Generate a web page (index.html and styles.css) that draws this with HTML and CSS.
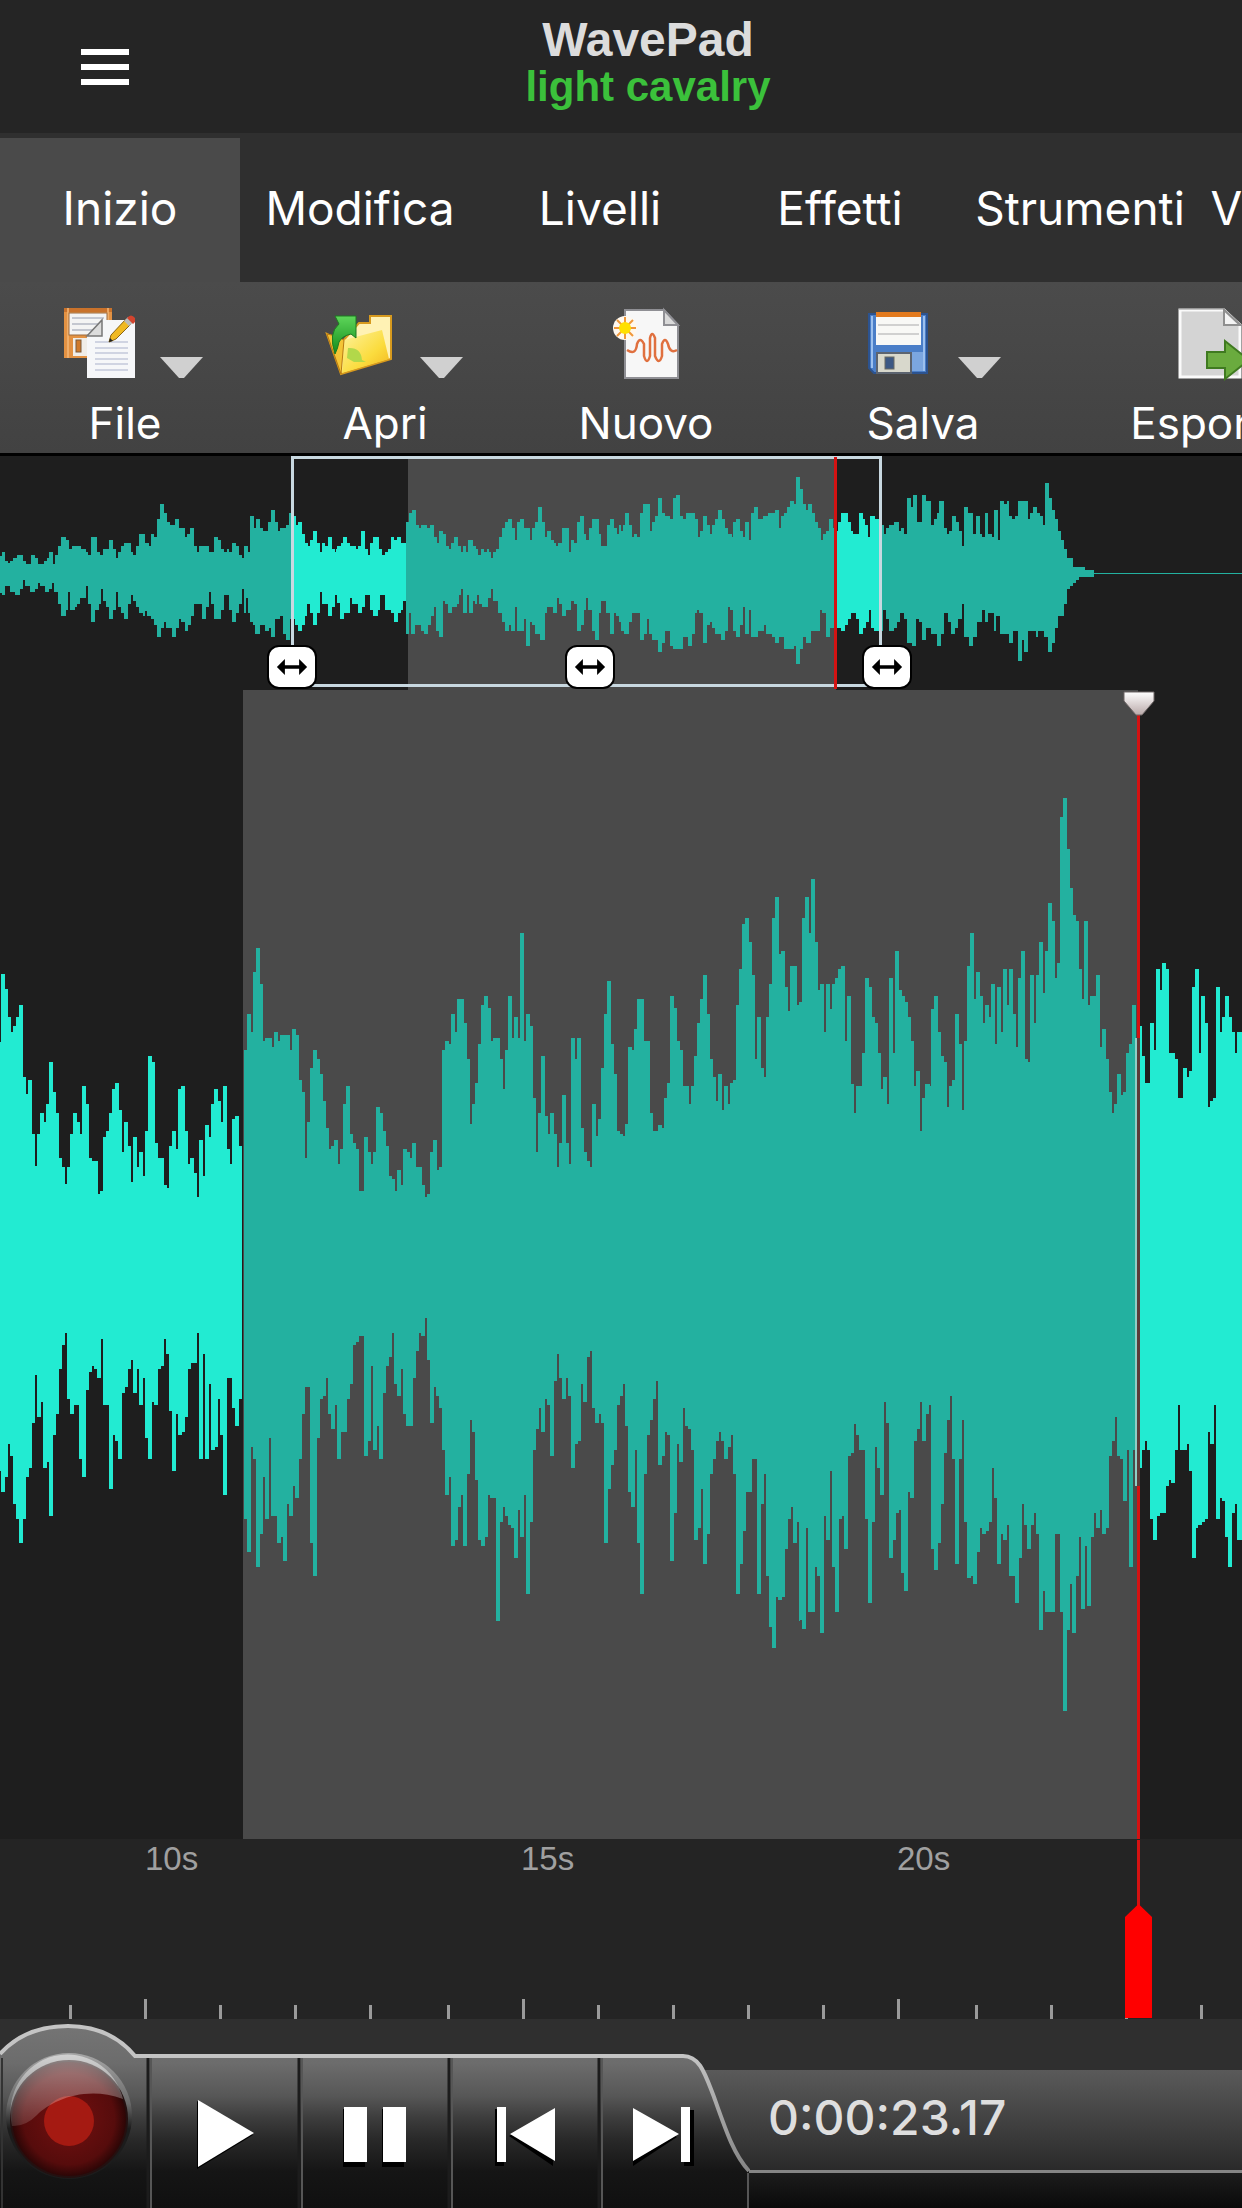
FILE: index.html
```html
<!DOCTYPE html>
<html lang="it">
<head>
  <meta charset="UTF-8">
  <meta name="viewport" content="width=device-width, initial-scale=1.0">
  <title>WavePad</title>
  <link rel="stylesheet" href="styles.css">
</head>
<body>

  <!-- Header -->
  <header class="header">
    <button type="button" class="menu-button" aria-label="Menu">
      <span class="menu-line"></span>
      <span class="menu-line"></span>
      <span class="menu-line"></span>
    </button>
    <div class="title">
      <h1>WavePad</h1>
      <p>light cavalry</p>
    </div>
  </header>

  <!-- Tabs -->
  <nav class="tabs">
    <button type="button" class="tab active">Inizio</button>
    <button type="button" class="tab">Modifica</button>
    <button type="button" class="tab">Livelli</button>
    <button type="button" class="tab">Effetti</button>
    <button type="button" class="tab">Strumenti</button>
    <button type="button" class="tab">Visualizza</button>
  </nav>

  <!-- Toolbar -->
  <div class="toolbar">
    <button type="button" class="tool tool-file has-menu">
      <span class="tool-icons">
        <svg class="icon" viewBox="0 0 72 72">
          <rect x="0" y="2" width="48" height="50" fill="#e39243"/>
          <path d="M0 2H48V6H0Z" fill="#c9722b"/>
          <path d="M4 2V52M44 2V20" stroke="#f5b878" stroke-width="1.500"/>
          <rect x="5" y="7" width="38" height="22" fill="#f4f4f4" stroke="#9b6b3f"/>
          <path d="M8 12H40M8 18H40M8 24H40" stroke="#b4b8c4" stroke-width="1.500"/>
          <rect x="9" y="32" width="20" height="18" fill="#f0ede8"/>
          <rect x="12" y="34" width="5" height="12" fill="#cf7a2c" stroke="#7a5a3a"/>
          <path d="M38 14H71V72H23V30Z" fill="#f6f7f9"/>
          <path d="M38 14V30H23Z" fill="#dcdcdc" stroke="#777" stroke-width="1.500"/>
          <path d="M31 36H64M31 42H64M31 47H64M31 53H64M31 58H64M31 64H64" stroke="#c3c9da" stroke-width="1.500"/>
          <path d="M45 36L47 29L62 13L67 18L52 33Z" fill="#f0b922" stroke="#8a6414"/>
          <path d="M45 36L46 32L49 35Z" fill="#222"/>
          <path d="M60 15L64 11L70 16L65 20Z" fill="#b9b9b9"/>
          <path d="M63 12Q67 7 71 12V16L69 18Z" fill="#d2442e"/>
        </svg>
        <svg class="arrow" viewBox="0 0 43 21"><path d="M0 0H43L24 21H19Z" fill="#d0d0d0"/></svg>
      </span>
      <span class="tool-label">File</span>
    </button>
    <button type="button" class="tool tool-open has-menu">
      <span class="tool-icons">
        <svg class="icon" viewBox="0 0 72 72">
          <defs>
            <linearGradient id="folder" x1="0" y1="0" x2="1" y2="1">
              <stop offset="0" stop-color="#fdf3a0"/>
              <stop offset=".6" stop-color="#fbdc3e"/>
              <stop offset="1" stop-color="#f3b51c"/>
            </linearGradient>
            <linearGradient id="leaf" x1="0" y1="0" x2="0" y2="1">
              <stop offset="0" stop-color="#5ed65a"/>
              <stop offset="1" stop-color="#128a1a"/>
            </linearGradient>
          </defs>
          <path d="M3 28L18 36L35 17H46V10H67V53L17 68Z" fill="#fff2b4" stroke="#d79a1e" stroke-width="2"/>
          <path d="M20 34L58 24L65 53L18 67Z" fill="url(#folder)"/>
          <path d="M3 28L17 68L20 34L12 30Z" fill="#f4c436" stroke="#b97a10"/>
          <path d="M24 42Q37 41 38 54L42 56L30 56L23 52Z" fill="#b2d84a"/>
          <path d="M11 48Q4 27 15 18L11 10H32V32L27 28Q18 30 15 36Q14 42 11 48Z" fill="url(#leaf)" stroke="#1d7a20"/>
        </svg>
        <svg class="arrow" viewBox="0 0 43 21"><path d="M0 0H43L24 21H19Z" fill="#d0d0d0"/></svg>
      </span>
      <span class="tool-label">Apri</span>
    </button>
    <button type="button" class="tool tool-new">
      <span class="tool-icons">
        <svg class="icon" viewBox="0 0 72 72">
          <path d="M15 4H54L68 19V72H15Z" fill="#f7f7f7" stroke="#8f8f94" stroke-width="2"/>
          <path d="M54 4V19H68Z" fill="#d9d9d9" stroke="#8f8f94" stroke-width="2"/>
          <path d="M17 44Q26 50 27 38Q30 30 34 38V50Q37 60 40 50V32Q42 24 45 32V50Q49 60 52 50V38Q55 30 58 38Q60 48 67 44" fill="none" stroke="#e0703f" stroke-width="2.500"/>
          <circle cx="15" cy="22" r="12" fill="#fff8ee"/>
          <path d="M15 11V33M4 22H26M7 14L23 30M23 14L7 30" stroke="#f0983a" stroke-width="2"/>
          <circle cx="15" cy="22" r="6" fill="#ffe000"/>
        </svg>
      </span>
      <span class="tool-label">Nuovo</span>
    </button>
    <button type="button" class="tool tool-save has-menu">
      <span class="tool-icons">
        <svg class="icon" viewBox="0 0 72 72">
          <path d="M7 8H65V67H12L7 62Z" fill="#4a7ec8" stroke="#2c5390" stroke-width="2"/>
          <path d="M10 10V62M62 10V65" stroke="#9cc0ee" stroke-width="2"/>
          <rect x="14" y="6" width="45" height="6" fill="#e27a1e"/>
          <rect x="14" y="11" width="45" height="28" fill="#f8f8f6"/>
          <path d="M16 19H57M16 28H57" stroke="#d0d0d0" stroke-width="2"/>
          <rect x="49" y="46" width="12" height="19" fill="#7ba6e0"/>
          <rect x="15" y="47" width="34" height="20" fill="#d8d8cc" stroke="#5c6470" stroke-width="2"/>
          <rect x="23" y="51" width="9" height="12" fill="#3c5884" stroke="#6a6a62"/>
        </svg>
        <svg class="arrow" viewBox="0 0 43 21"><path d="M0 0H43L24 21H19Z" fill="#d0d0d0"/></svg>
      </span>
      <span class="tool-label">Salva</span>
    </button>
    <button type="button" class="tool tool-export">
      <span class="tool-icons">
        <svg class="icon" viewBox="0 0 72 72">
          <path d="M6 4H50L66 19V71H6Z" fill="#d4d4d4" stroke="#fafafa" stroke-width="3"/>
          <path d="M5 3H50L67 19" fill="none" stroke="#8f8f8f"/>
          <path d="M50 4V19H66Z" fill="#f4f4f4" stroke="#8f8f8f" stroke-width="2"/>
          <path d="M33 46H51V35L75 54L51 73V62H33Z" fill="#6aab3e" stroke="#3f7a20" stroke-width="2"/>
        </svg>
      </span>
      <span class="tool-label">Esporta</span>
    </button>
  </div>

  <!-- Whole file overview -->
  <section class="overview">
    <svg class="wave" viewBox="0 0 1242 234" preserveAspectRatio="none" shape-rendering="crispEdges">
      <rect x="408" y="0" width="428" height="234" fill="#4a4a4a"/>
      <g transform="translate(0 -6) scale(.396 .3333)">
        <path class="dim" d="M0 370V318H4V306H12V333H20V339H26V333H34V324H42V315H57V333H66V342H78V315H88V324H96V342H110V333H118V324H124V306H134V342H139V315H147V288H155V261H166V270H174V297H182V288H204V297H216V306H222V315H230V261H246V306H253V315H260V297H275V270H285V297H293V324H299V306H306V288H312V279H330V306H336V315H343V288H352V252H367V279H376V288H382V252H390V261H397V207H405V162H414V189H421V216H429V225H442V207H452V234H466V261H473V252H480V234H490V288H497V306H503V288H527V306H540V261H550V270H558V297H566V306H572V297H578V306H586V279H596V288H603V315H611V324H617V288H626V306H631V198H641V234H646V207H656V234H664V243H676V216H684V180H694V216H702V243H708V234H722V225H730V189H742V370Z"/>
        <path class="dim" d="M0 360V430H4V435H12V408H24V426H39V435H50V417H57V390H62V408H76V426H88V417H95V399H102V408H114V426H124V417H131V399H137V426H147V462H154V498H166V480H172V426H177V480H189V471H194V462H202V444H216V408H222V462H230V516H240V480H250V462H255V417H260V453H268V471H276V507H285V480H293V426H299V471H306V489H314V507H323V462H330V435H336V453H343V471H352V489H360V498H367V484H372V498H382V507H389V525H396V561H406V534H413V516H420V534H434V561H444V534H451V507H458V516H466V543H476V525H482V498H490V462H510V507H520V471H528V426H534V462H540V507H558V480H566V435H578V480H586V516H596V489H603V462H611V417H617V489H622V444H627V489H631V516H638V525H645V552H656V525H668V543H680V534H685V561H694V507H707V498H714V552H722V570H732V507H742V360Z"/>
        <path class="bright" d="M742 370V198H747V225H753V216H763V252H770V279H777V288H783V270H790V243H800V279H807V306H813V279H820V288H828V261H838V297H845V306H848V297H852V288H860V279H866V261H876V279H883V288H898V297H903V288H911V243H922V297H929V315H935V279H943V261H958V297H965V315H973V306H981V297H988V261H996V270H1002V261H1012V279H1025V370Z"/>
        <path class="bright" d="M742 360V507H746V525H752V543H763V525H770V498H776V462H783V489H790V525H800V489H808V426H813V462H828V498H838V471H845V435H852V460H858V507H868V489H883V444H890V462H903V489H914V471H921V435H935V480H942V498H955V480H960V435H971V480H988V489H994V516H1004V489H1012V480H1018V453H1025V360Z"/>
        <path class="dim" d="M1025 370V216H1032V189H1040V180H1050V225H1058V234H1064V225H1078V234H1086V225H1096V261H1103V279H1108V243H1118V252H1126V288H1133V297H1138V279H1146V261H1156V288H1164V306H1170V288H1177V306H1183V270H1194V288H1202V297H1208V315H1214V297H1222V306H1230V297H1236V306H1240V324H1246V306H1253V297H1260V261H1268V234H1275V216H1283V207H1293V234H1300V270H1306V216H1313V207H1323V234H1338V270H1344V234H1350V216H1358V171H1368V216H1376V261H1382V243H1391V270H1398V279H1405V288H1410V279H1420V234H1436V306H1442V270H1450V279H1457V216H1464V198H1474V252H1480V270H1487V234H1495V207H1512V252H1518V288H1534V225H1541V207H1550V234H1558V252H1564V225H1569V370Z"/>
        <path class="dim" d="M1025 360V552H1034V489H1039V552H1048V525H1063V543H1071V552H1080V525H1088V498H1096V471H1101V543H1108V561H1118V453H1124V462H1132V489H1142V471H1153V462H1158V435H1164V417H1169V489H1179V435H1184V489H1194V453H1199V462H1204V435H1209V462H1217V471H1233V444H1241V417H1246V453H1258V489H1268V516H1275V543H1285V525H1290V543H1300V471H1306V543H1323V507H1328V588H1338V516H1344V525H1351V552H1364V570H1376V489H1382V471H1397V489H1406V444H1411V462H1420V498H1430V480H1442V453H1449V462H1457V543H1467V525H1474V480H1480V444H1485V480H1494V543H1502V570H1512V489H1518V453H1530V489H1541V552H1550V489H1556V498H1564V516H1569V360Z"/>
      </g>
      <g transform="translate(621 -6) scale(.396 .3333)">
        <path class="dim" d="M0 370V243H4V225H10V189H20V225H28V261H34V252H40V261H48V189H56V162H73V243H79V216H86V198H93V144H104V189H111V198H124V207H131V144H138V135H149V198H156V207H164V189H187V207H194V261H200V243H208V198H218V225H226V252H231V225H237V207H244V180H256V207H263V234H270V252H280V261H283V216H290V207H300V243H308V261H314V216H322V270H328V189H336V171H346V207H358V198H372V189H388V180H400V234H405V198H411V189H418V171H428V153H437V162H442V81H452V117H460V162H467V180H472V162H482V189H490V216H497V234H504V270H510V252H518V243H525V207H535V234H540V370Z"/>
        <path class="dim" d="M0 360V543H7V552H20V516H28V489H48V570H58V552H66V507H71V552H79V570H93V606H104V579H111V543H124V588H132V597H156V561H168V588H180V552H187V489H192V480H197V489H206V579H216V525H224V516H229V534H237V552H252V570H262V543H270V471H275V480H283V543H290V561H300V525H308V471H313V552H323V480H328V561H345V543H362V525H366V552H382V561H388V579H398V561H411V597H436V588H442V642H452V597H460V561H466V579H481V543H502V480H508V489H518V561H528V534H537V516H540V360Z"/>
        <path class="bright" d="M546 370V243H549V216H555V189H573V216H580V243H586V252H600V189H610V207H617V225H624V261H630V198H641V207H652V370Z"/>
        <path class="bright" d="M546 360V534H556V543H566V525H574V507H582V489H594V507H600V552H610V534H618V516H627V480H632V534H640V543H652V360Z"/>
        <path class="dim" d="M652 370V225H664V252H669V234H677V225H690V216H702V243H708V234H715V252H721V144H732V171H737V135H747V216H760V135H770V153H783V225H791V207H798V189H804V153H815V234H822V252H828V243H836V198H846V216H853V243H860V288H866V171H876V189H890V252H896V198H906V252H912V261H918V189H928V252H936V261H942V180H952V270H957V153H968V162H974V153H981V198H988V207H994V198H1002V153H1028V207H1034V189H1040V171H1050V189H1057V198H1065V225H1070V99H1080V144H1088V180H1095V207H1103V243H1110V270H1118V297H1126V324H1141V351H1172V360H1187V369H1195V374Z"/>
        <path class="dim" d="M652 360V543H662V480H668V507H677V543H689V534H698V516H705V489H715V507H721V579H736V588H746V507H752V516H760V570H770V534H782V552H798V588H808V552H815V489H827V516H834V552H844V534H852V507H862V462H867V561H880V588H890V561H898V516H912V480H918V516H928V489H942V543H948V498H957V552H980V579H990V543H1002V633H1013V570H1018V606H1028V543H1048V561H1052V543H1068V561H1078V606H1088V579H1096V534H1104V498H1118V462H1126V417H1134V408H1142V399H1149V390H1157V381H1195V360Z"/>
      </g>
      <rect class="dim" x="1090" y="117" width="152" height="1"/>
      <!-- visible range and playhead -->
      <path class="range" d="M292.500 190V1.500H880.500V190M300 229.500H880"/>
      <path class="head-line" d="M835.500 1V233"/>
    </svg>
    <button type="button" class="handle handle-start" aria-label="Inizio vista">
      <svg viewBox="0 0 34 18"><path d="M0 9L9 0V7H25V0L34 9L25 18V11H9V18Z"/></svg>
    </button>
    <button type="button" class="handle handle-move" aria-label="Sposta vista">
      <svg viewBox="0 0 34 18"><path d="M0 9L9 0V7H25V0L34 9L25 18V11H9V18Z"/></svg>
    </button>
    <button type="button" class="handle handle-end" aria-label="Fine vista">
      <svg viewBox="0 0 34 18"><path d="M0 9L9 0V7H25V0L34 9L25 18V11H9V18Z"/></svg>
    </button>
  </section>

  <!-- Zoomed waveform -->
  <section class="editor">
    <svg class="wave" viewBox="0 0 1242 1149" preserveAspectRatio="none">
      <defs>
        <linearGradient id="pin" x1="0" y1="0" x2="0" y2="1">
          <stop offset="0" stop-color="#ffffff"/>
          <stop offset="1" stop-color="#b9a9a9"/>
        </linearGradient>
      </defs>
      <g shape-rendering="crispEdges">
        <rect x="243" y="0" width="895" height="1149" fill="#4a4a4a"/>
        <g transform="translate(0 90) scale(.33333 .5357)">
          <path class="bright" d="M0 900V490H3V363H15V391H24V442H33V470H39V459H48V442H57V420H69V554H78V587H83V560H96V661H105V721H111V661H120V622H132V638H138V605H147V526H159V582H168V622H177V706H186V722H195V755H201V722H210V661H219V622H231V638H240V661H246V571H258V605H267V706H276V711H294V773H300V767H309V666H318V655H327V622H336V577H345V566H357V616H366V694H372V638H384V683H393V750H399V666H411V722H417V694H429V739H435V655H444V515H456V526H465V678H474V706H492V756H501V762H507V683H516V655H528V689H534V577H543V571H555V655H564V717H570V706H582V734H591V778H597V672H609V739H615V644H627V666H633V605H642V577H654V599H663V638H669V571H681V689H690V717H696V633H705V627H717V683H726V900Z"/>
          <path class="bright" d="M0 800V1290H3V1329H15V1301H24V1240H30V1262H39V1351H48V1379H57V1424H69V1379H78V1301H87V1284H96V1200H105V1111H111V1189H123V1161H129V1284H141V1273H147V1374H159V1223H168V1183H177V1099H186V1055H195V1032H201V1155H210V1183H222V1167H237V1267H246V1301H258V1139H267V1105H276V1094H282V1099H291V1116H303V1044H309V1167H327V1323H339V1223H345V1234H354V1267H366V1144H375V1133H384V1099H393V1083H399V1144H411V1099H417V1167H429V1116H435V1228H444V1267H456V1161H462V1167H474V1099H483V1094H492V1044H498V1072H507V1178H516V1290H528V1183H534V1223H546V1217H555V1189H564V1099H573V1088H591V1032H597V1267H609V1072H615V1267H627V1127H633V1251H645V1245H654V1155H660V1223H669V1335H681V1116H696V1172H705V1206H717V1155H726V800Z"/>
          <path class="dim" d="M732 900V504H741V437H753V470H759V358H768V314H780V381H788V487H795V482H816V498H822V470H834V487H840V476H870V504H876V465H888V476H897V560H906V582H915V706H921V638H930V538H939V504H951V521H960V549H969V599H978V650H987V689H993V683H1002V672H1014V717H1020V689H1029V605H1038V571H1050V661H1059V678H1068V689H1077V767H1092V666H1104V694H1113V717H1119V694H1128V610H1140V622H1149V655H1158V683H1167V739H1176V745H1185V767H1191V728H1200V900Z"/>
          <path class="dim" d="M732 800V1379H741V1441H753V1245H759V1267H768V1469H780V1407H789V1301H795V1379H807V1228H813V1374H831V1424H843V1413H849V1458H861V1351H867V1374H879V1318H885V1340H897V1267H906V1183H915V1133H930V1424H939V1486H951V1228H960V1155H969V1150H978V1116H984V1183H993V1211H1005V1167H1011V1267H1023V1217H1041V1155H1050V1127H1059V1055H1068V1049H1077V1038H1092V1262H1104V1234H1113V1094H1119V1251H1131V1206H1137V1267H1149V1144H1158V1094H1167V1077H1176V1032H1182V1127H1191V1150H1200V800Z"/>
        </g>
        <g transform="translate(400 90) scale(.33333 .574)">
          <path class="dim" d="M0 900V679H3V705H9V643H21V648H30V658H36V632H48V674H66V705H75V726H81V721H90V648H99V627H111V679H117V674H126V470H135V455H147V460H153V408H165V439H171V382H192V423H201V486H210V600H216V564H225V528H234V460H243V392H252V376H264V397H273V455H279V449H300V486H309V538H315V470H324V376H336V449H342V413H354V449H360V267H372V455H378V408H390V429H399V554H408V648H414V580H423V481H435V585H444V616H450V580H462V616H471V674H477V632H486V549H498V632H507V669H513V449H525V486H531V449H543V606H552V648H561V664H570V674H576V564H588V621H594V590H603V502H612V408H621V350H633V460H642V512H651V611H660V616H669V621H675V600H684V465H696V470H702V434H711V382H732V455H750V580H759V611H774V601H786V606H792V554H801V528H810V376H822V397H831V455H840V470H849V533H867V564H873V533H882V481H891V423H900V382H909V340H921V408H930V486H939V517H948V559H954V512H966V575H972V533H984V564H990V528H999V522H1008V392H1017V329H1026V251H1035V240H1047V282H1056V340H1065V486H1071V413H1083V502H1092V517H1098V413H1107V355H1116V240H1125V204H1137V303H1143V298H1155V361H1164V402H1170V324H1191V392H1197V387H1200V900Z"/>
          <path class="dim" d="M0 850V1074H3V1026H9V1105H18V1125H39V1042H48V995H57V963H63V969H75V937H81V1010H90V1120H102V1058H108V1073H117V1094H126V1167H135V1246H147V1214H153V1335H165V1324H174V1267H183V1246H189V1335H201V1209H210V1115H216V1136H225V1220H234V1324H243V1335H255V1319H264V1246H270V1251H288V1465H300V1293H309V1267H315V1282H324V1298H333V1303H342V1355H354V1272H360V1319H372V1246H378V1418H390V1293H399V1167H408V1131H417V1094H423V1136H435V1079H441V1089H450V1178H462V1047H471V1000H477V1042H486V1078H498V1042H504V1073H513V1199H525V1157H534V1152H543V1052H549V1084H561V1005H570V995H576V1094H585V1120H597V1105H603V1120H612V1329H624V1235H633V1193H642V1167H651V1089H660V1073H669V1052H675V1126H684V1241H693V1267H705V1167H711V1329H720V1418H732V1209H741V1141H750V1115H759V1078H768V1047H774V1193H786V1178H795V1136H801V1141H810V1361H822V1277H831V1157H837V1188H849V1094H855V1126H864V1131H873V1167H882V1324H894V1303H903V1235H909V1366H921V1314H930V1209H939V1183H948V1152H957V1136H963V1152H972V1183H984V1162H993V1141H999V1209H1008V1418H1020V1366H1029V1308H1038V1241H1056V1183H1071V1418H1083V1261H1092V1209H1098V1387H1107V1476H1116V1512H1128V1424H1134V1429H1146V1423H1155V1340H1164V1288H1173V1267H1179V1329H1191V1293H1197V1465H1200V850Z"/>
        </g>
        <g transform="translate(800 -10) scale(.33333 .676)">
          <path class="dim" d="M0 900V476H6V352H15V321H27V374H33V294H45V388H54V459H60V450H72V521H78V450H90V486H96V450H105V441H114V428H123V423H135V534H141V467H153V597H162V641H168V601H186V552H195V441H207V454H216V499H225V508H234V552H243V605H249V587H261V627H267V441H279V552H285V401H297V459H306V467H315V476H324V499H333V534H342V601H348V578H360V667H366V618H375V597H390V601H393V486H402V467H414V521H423V556H432V565H441V632H447V601H456V592H465V494H477V539H486V636H492V534H501V423H510V374H522V472H528V432H540V467H549V508H555V481H567V499H573V450H585V539H591V454H603V521H609V428H621V481H627V428H639V494H648V543H654V441H663V401H675V561H684V565H690V437H702V508H708V437H717V388H729V463H735V401H744V330H756V356H765V441H771V419H780V202H789V175H801V250H810V308H819V348H828V356H837V428H846V472H852V356H864V481H870V467H888V437H900V543H906V516H918V561H927V610H936V641H942V627H951V583H963V614H969V610H978V552H987V539H996V481H1008V530H1014V900Z"/>
          <path class="dim" d="M0 850V1390H6V1404H18V1254H24V1379H45V1312H51V1325H60V1410H72V1236H78V1272H90V1170H96V1312H105V1379H117V1241H126V1236H132V1285H144V1148H153V1143H162V1100H168V1117H177V1139H195V1241H204V1365H216V1245H225V1135H231V1166H240V1206H252V1068H258V1099H267V1299H279V1272H288V1232H297V1228H303V1321H312V1347H324V1201H330V1210H342V1126H351V1108H360V1068H366V1126H378V1086H387V1073H393V1285H402V1316H414V1276H423V1219H432V1143H441V1095H450V1059H456V1152H465V1307H477V1152H486V1095H492V1245H501V1329H513V1325H519V1338H531V1290H540V1254H546V1263H558V1259H567V1245H576V1166H582V1210H591V1307H603V1263H609V1272H621V1250H627V1325H645V1365H657V1299H666V1219H672V1250H681V1285H693V1250H702V1232H708V1263H717V1405H729V1348H735V1379H765V1263H780V1379H789V1525H801V1405H810V1338H816V1410H828V1325H837V1268H843V1374H855V1281H861V1370H873V1268H882V1232H888V1254H900V1228H906V1263H918V1254H927V1148H936V1126H945V1090H951V1148H960V1152H969V1215H981V1139H987V1312H999V1139H1005V1192H1014V850Z"/>
          <path class="bright" d="M1020 900V512H1026V556H1035V596H1050V507H1062V547H1068V428H1080V459H1086V419H1098V428H1107V552H1125V561H1134V618H1149V574H1161V587H1167V578H1176V454H1185V428H1197V552H1203V467H1215V507H1224V632H1230V623H1239V618H1248V454H1260V521H1266V499H1275V467H1287V499H1296V521H1305V552H1311V521H1326V900Z"/>
          <path class="bright" d="M1020 850V1166H1026V1139H1035V1126H1041V1139H1050V1241H1059V1272H1071V1237H1080V1232H1098V1192H1107V1183H1113V1188H1125V1139H1134V1073H1140V1139H1161V1130H1167V1170H1176V1299H1188V1254H1194V1250H1206V1245H1215V1241H1224V1112H1230V1130H1242V1073H1248V1241H1260V1210H1266V1214H1275V1268H1284V1312H1296V1232H1305V1219H1311V1272H1326V850Z"/>
        </g>
        <path class="head-line" d="M1138.500 25V1149"/>
        <rect x="1135" y="348" width="2" height="448" fill="#8fcfc6"/>
        <rect x="1137" y="348" width="3" height="448" fill="#5c3a38"/>
      </g>
      <path d="M1124 2H1154V11L1142 25H1136L1124 11Z" fill="url(#pin)" stroke="#6e6666"/>
    </svg>
  </section>

  <!-- Time ruler -->
  <section class="ruler">
    <svg class="wave" viewBox="0 0 1242 180" preserveAspectRatio="none">
      <path class="ticks" d="M70.500 166V180M145.500 160V180M220.500 166V180M295.500 166V180M370.500 166V180M448.500 166V180M523.500 160V180M598.500 166V180M673.500 166V180M748.500 166V180M823.500 166V180M898.500 160V180M976.500 166V180M1051.500 166V180M1126.500 166V180M1201.500 166V180"/>
      <path class="head-line" d="M1138.500 1V70"/>
      <path d="M1138.500 65L1152 78V179H1125V78Z" fill="#ff0000"/>
    </svg>
    <div class="ruler-labels">
      <span>10s</span>
      <span>15s</span>
      <span>20s</span>
    </div>
  </section>

  <!-- Transport controls -->
  <footer class="transport">
    <div class="deck">
      <svg class="plate" viewBox="0 0 750 189">
        <defs>
          <linearGradient id="metal" gradientUnits="userSpaceOnUse" x1="0" y1="8" x2="0" y2="189">
            <stop offset="0" stop-color="#747474"/>
            <stop offset=".2" stop-color="#6c6c6c"/>
            <stop offset=".38" stop-color="#575757"/>
            <stop offset=".5" stop-color="#3d3d3d"/>
            <stop offset=".62" stop-color="#292929"/>
            <stop offset=".8" stop-color="#151515"/>
            <stop offset="1" stop-color="#101010"/>
          </linearGradient>
          <linearGradient id="edge" gradientUnits="userSpaceOnUse" x1="0" y1="37" x2="0" y2="152">
            <stop offset="0" stop-color="#c4c4c4"/>
            <stop offset="1" stop-color="#858585"/>
          </linearGradient>
        </defs>
        <path d="M0 35Q25 7 68 7Q110 7 135 37H683C700 37 705 55 714 78C726 112 734 136 749 152V189H0Z" fill="url(#metal)"/>
        <path d="M0 35Q25 7 68 7Q110 7 135 37H683C700 37 705 55 714 78C726 112 734 136 749 152" fill="none" stroke="url(#edge)" stroke-width="4"/>
        <path d="M148 39V189M299 39V189M449 39V189M599 39V189" stroke="#1c1c1c" stroke-width="3"/>
        <path d="M151 39V189M302 39V189M452 39V189M602 39V189M748 154V189" stroke="#565656" stroke-width="2"/>
        <path d="M2 39V189" stroke="#333" stroke-width="2"/>
      </svg>
      <button type="button" class="deck-button record" aria-label="Registra">
        <svg viewBox="0 0 128 130">
          <defs>
            <linearGradient id="ring" x1="0" y1="0" x2="0" y2="1">
              <stop offset="0" stop-color="#a6a6a6"/>
              <stop offset=".4" stop-color="#6a6a6a"/>
              <stop offset=".6" stop-color="#1c1c1c"/>
            </linearGradient>
            <radialGradient id="lens">
              <stop offset="0" stop-color="#741010"/>
              <stop offset=".8" stop-color="#560c0c"/>
              <stop offset="1" stop-color="#2c0606"/>
            </radialGradient>
            <linearGradient id="gloss" x1="0" y1="0" x2="0" y2="1">
              <stop offset="0" stop-color="#fff" stop-opacity=".5"/>
              <stop offset="1" stop-color="#fff" stop-opacity=".12"/>
            </linearGradient>
          </defs>
          <circle cx="64" cy="65" r="63" fill="url(#ring)"/>
          <circle cx="64" cy="68" r="59" fill="#241010"/>
          <circle cx="64" cy="68" r="57" fill="url(#lens)"/>
          <circle cx="64" cy="70" r="25" fill="#a51a12"/>
          <path d="M7 75A57 58 0 0 1 118 48C80 34 46 50 32 64Q20 76 7 75Z" fill="url(#gloss)"/>
        </svg>
      </button>
      <button type="button" class="deck-button" aria-label="Riproduci">
        <svg viewBox="0 0 64 72"><path class="shade" d="M4 2V70L60 36Z"/><path class="glyph" d="M5 1V68L61 34Z"/></svg>
      </button>
      <button type="button" class="deck-button" aria-label="Pausa">
        <svg viewBox="0 0 64 72"><path class="shade" d="M0 10H22V68H0ZM39 10H61V68H39Z"/><path class="glyph" d="M1 8H24V63H1ZM40 8H63V63H40Z"/></svg>
      </button>
      <button type="button" class="deck-button" aria-label="Inizio traccia">
        <svg viewBox="0 0 64 72"><path class="shade" d="M2 10H11V67H2ZM60 12V67L16 37Z"/><path class="glyph" d="M4 8H13V63H4ZM62 9V62L17 35Z"/></svg>
      </button>
      <button type="button" class="deck-button last" aria-label="Fine traccia">
        <svg viewBox="0 0 64 72"><path class="shade" d="M2 12V67L46 38ZM53 11H63V67H53Z"/><path class="glyph" d="M2 9V62L48 35ZM50 8H59V63H50Z"/></svg>
      </button>
    </div>
    <div class="display">
      <output class="time">0:00:23.17</output>
    </div>
  </footer>

</body>
</html>
```
FILE: styles.css
```css
* {
  box-sizing: border-box;
  margin: 0;
  padding: 0;
}

body {
  display: flex;
  flex-direction: column;
  min-height: 100vh;
  overflow-x: hidden;
  background-color: #2f2f2f;
  color: #fff;
  font-family: Inter, "Liberation Sans", sans-serif;
}

button {
  background: none;
  border: none;
  color: inherit;
  font: inherit;
  cursor: pointer;
}

/* Header */
.header {
  display: flex;
  height: 133px;
  padding-right: 156px;
  background-color: #252525;
}

.menu-button {
  display: flex;
  flex-direction: column;
  justify-content: center;
  gap: 9px;
  width: 210px;
  padding: 0 81px;
}

.menu-line {
  height: 6px;
  background-color: #fff;
}

.title {
  flex: 1;
  padding-top: 16px;
  text-align: center;
  font-family: "Liberation Sans", Arial, sans-serif;
  font-weight: bold;
}

.title h1 {
  font-size: 48px;
  line-height: 48px;
  color: #dcdcdc;
}

.title p {
  font-size: 42px;
  line-height: 46px;
  color: #3bc13b;
}

/* Tabs */
.tabs {
  display: flex;
  height: 149px;
  padding-top: 5px;
  overflow: hidden;
}

.tab {
  flex: 0 0 240px;
  padding-bottom: 4px;
  font-size: 46px;
  white-space: nowrap;
}

.tab.active {
  background-color: #4a4a4a;
}

/* Toolbar */
.toolbar {
  display: flex;
  height: 174px;
  overflow: hidden;
  background: linear-gradient(#4b4b4b, #424242);
  border-bottom: 3px solid #000;
}

.tool {
  display: flex;
  flex: none;
  flex-direction: column;
  align-items: center;
  padding-top: 24px;
}

.tool-file {
  width: 266px;
}

.tool-open {
  width: 254px;
}

.tool-new {
  width: 252px;
}

.tool-save {
  width: 318px;
}

.tool-export {
  width: 240px;
}

.tool-icons {
  display: flex;
  align-items: flex-end;
  gap: 24px;
}

.icon {
  display: block;
  width: 72px;
  height: 72px;
  overflow: visible;
}

.arrow {
  display: block;
  width: 43px;
  height: 21px;
}

.tool-label {
  margin-top: 19px;
  font-size: 44px;
  line-height: 52px;
}

.has-menu .tool-label {
  padding-right: 16px;
}

/* Waveforms */
.wave {
  position: absolute;
  top: 0;
  left: 0;
  width: 100%;
  height: 100%;
}

.dim {
  fill: #23b1a0;
}

.bright {
  fill: #22ebd2;
}

.range {
  fill: none;
  stroke: #c8d8e0;
  stroke-width: 3;
}

.head-line {
  fill: none;
  stroke: #d41212;
  stroke-width: 3;
}

.overview {
  position: relative;
  height: 234px;
  background-color: #1e1e1e;
}

.handle {
  position: absolute;
  bottom: 1px;
  display: flex;
  align-items: center;
  justify-content: center;
  width: 50px;
  height: 44px;
  border: 2px solid #000;
  border-radius: 12px;
  background-color: #fff;
  transform: translateX(-50%);
}

.handle svg {
  width: 34px;
  height: 16px;
}

.handle-start {
  left: 23.5%;
}

.handle-move {
  left: 47.5%;
}

.handle-end {
  left: 71.4%;
}

.editor {
  position: relative;
  flex: 1;
  background-color: #1e1e1e;
}

/* Ruler */
.ruler {
  position: relative;
  height: 180px;
  background-color: #242424;
}

.ticks {
  stroke: #9a9a9a;
  stroke-width: 3;
}

.ruler-labels {
  display: grid;
  grid-template-columns: repeat(3, 376px);
  padding: 2px 0 0 145px;
  overflow: hidden;
  color: #a0a0a0;
  font-family: "Liberation Sans", Arial, sans-serif;
  font-size: 33px;
  line-height: 36px;
}

/* Transport */
.transport {
  display: flex;
  height: 189px;
}

.deck {
  position: relative;
  z-index: 1;
  display: flex;
  align-items: flex-end;
  flex: 0 0 750px;
}

.plate {
  position: absolute;
  top: 0;
  left: 0;
  width: 750px;
  height: 189px;
}

.deck-button {
  position: relative;
  display: flex;
  align-items: center;
  justify-content: center;
  width: 150px;
  height: 147px;
}

.deck-button svg {
  width: 64px;
  height: 72px;
}

.deck-button.last {
  width: 126px;
}

.record {
  height: 157px;
  padding-right: 12px;
  align-items: flex-start;
}

.deck-button.record svg {
  width: 128px;
  height: 130px;
}

.glyph {
  fill: #fff;
}

.shade {
  fill: #000;
}

.display {
  flex: 1;
  margin: 51px 0 0 -50px;
  background: linear-gradient(#1c1c1c, #0a0a0a) bottom / 100% 35px no-repeat;
}

.time {
  display: block;
  height: 103px;
  padding-left: 68px;
  border-bottom: 3px solid #868686;
  background: linear-gradient(#5a5a5a, #2a2a2a);
  color: #dedede;
  font-size: 48px;
  font-weight: 500;
  line-height: 96px;
}
```
